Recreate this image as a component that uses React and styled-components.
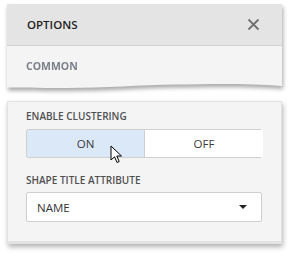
import styled, { createGlobalStyle } from 'styled-components'

const Global = createGlobalStyle`
    body {
        margin: 0;
        background: #ffffff;
        font-family: "Open Sans", "Noto Sans", sans-serif;
    }
`

const Page = styled.div`
    width: 292px;
    height: 257px;
    padding: 4px 10px 0 7px;
    box-sizing: border-box;
    display: flex;
    flex-direction: column;
    gap: 12px;
`

const Torn = styled.div`
    filter: drop-shadow(1px 3px 2px rgba(0, 0, 0, 0.35));
`

const TopPanel = styled.div`
    width: 275px;
    height: 85px;
    background: #f4f4f4;
    clip-path: path('M0 0 H275 V82 C240 79 200 80 170 80.5 C130 81 100 84 60 84 C30 84 10 83.5 0 83.5 Z');
    display: flex;
    flex-direction: column;
`

const Header = styled.div`
    height: 41px;
    background: #e4e4e4;
    border-bottom: 1px solid #d2d2d2;
    display: flex;
    align-items: center;
    justify-content: space-between;
    padding: 0 22px 0 20px;
`

const Title = styled.span`
    font-size: 11.5px;
    font-weight: 600;
    color: #1e1e1e;
`

const Section = styled.div`
    padding: 13px 0 0 19px;
    font-size: 10.5px;
    font-weight: 700;
    color: #7b8089;
`

const Panel = styled.div`
    width: 275px;
    height: 143px;
    box-sizing: border-box;
    background: #f4f4f4;
    border: 1px solid #e2e2e2;
    border-bottom: 3px solid #e3e3e3;
    box-shadow: 1px 3px 5px rgba(0, 0, 0, 0.3);
    padding: 6px 19px 0 18px;
    display: flex;
    flex-direction: column;
`

const Label = styled.div`
    font-size: 10px;
    font-weight: 600;
    color: #505050;
    height: 16px;
    line-height: 16px;
    margin-bottom: ${p => p.$gap}px;
`

const Toggle = styled.div`
    position: relative;
    display: grid;
    grid-template-columns: 118px 118px;
    height: 29px;
    box-sizing: border-box;
    border: 1px solid #cfcfcf;
    border-radius: 2px;
    margin-bottom: 14px;
`

const Option = styled.div`
    display: flex;
    align-items: center;
    justify-content: center;
    font-size: 11.5px;
    color: #3a3a3a;
    background: ${p => (p.$active ? '#dae8f8' : '#ffffff')};
    border-right: ${p => (p.$active ? '1px solid #cfcfcf' : 'none')};
`

const Cursor = styled.svg`
    position: absolute;
    left: 83px;
    top: 15px;
`

const Select = styled.div`
    height: 30px;
    box-sizing: border-box;
    border: 1px solid #cfcfcf;
    border-radius: 2px;
    background: #fff;
    display: flex;
    align-items: center;
    justify-content: space-between;
    padding: 0 14px 0 10px;
    font-size: 11.5px;
    color: #333;
`

function App() {
    return (
        <>
            <Global />
            <Page>
                <Torn>
                    <TopPanel>
                        <Header>
                            <Title>OPTIONS</Title>
                            <svg width="13" height="13" viewBox="0 0 13 13">
                                <path d="M1.5 1.5 L11.5 11.5 M11.5 1.5 L1.5 11.5" stroke="#707070" strokeWidth="1.8" />
                            </svg>
                        </Header>
                        <Section>COMMON</Section>
                    </TopPanel>
                </Torn>
                <Panel>
                    <Label $gap={5}>ENABLE CLUSTERING</Label>
                    <Toggle>
                        <Option $active>ON</Option>
                        <Option>OFF</Option>
                        <Cursor width="13" height="20" viewBox="0 0 13 20">
                            <path d="M1 1 L1 15 L4.5 11.8 L7 17.5 L9.2 16.5 L6.8 11 L11.5 11 Z" fill="#fff" stroke="#000" strokeWidth="1" strokeLinejoin="round" />
                        </Cursor>
                    </Toggle>
                    <Label $gap={4}>SHAPE TITLE ATTRIBUTE</Label>
                    <Select>
                        NAME
                        <svg width="8" height="4" viewBox="0 0 8 4">
                            <path d="M0 0 H8 L4 4 Z" fill="#222" />
                        </svg>
                    </Select>
                </Panel>
            </Page>
        </>
    )
}

export default App
